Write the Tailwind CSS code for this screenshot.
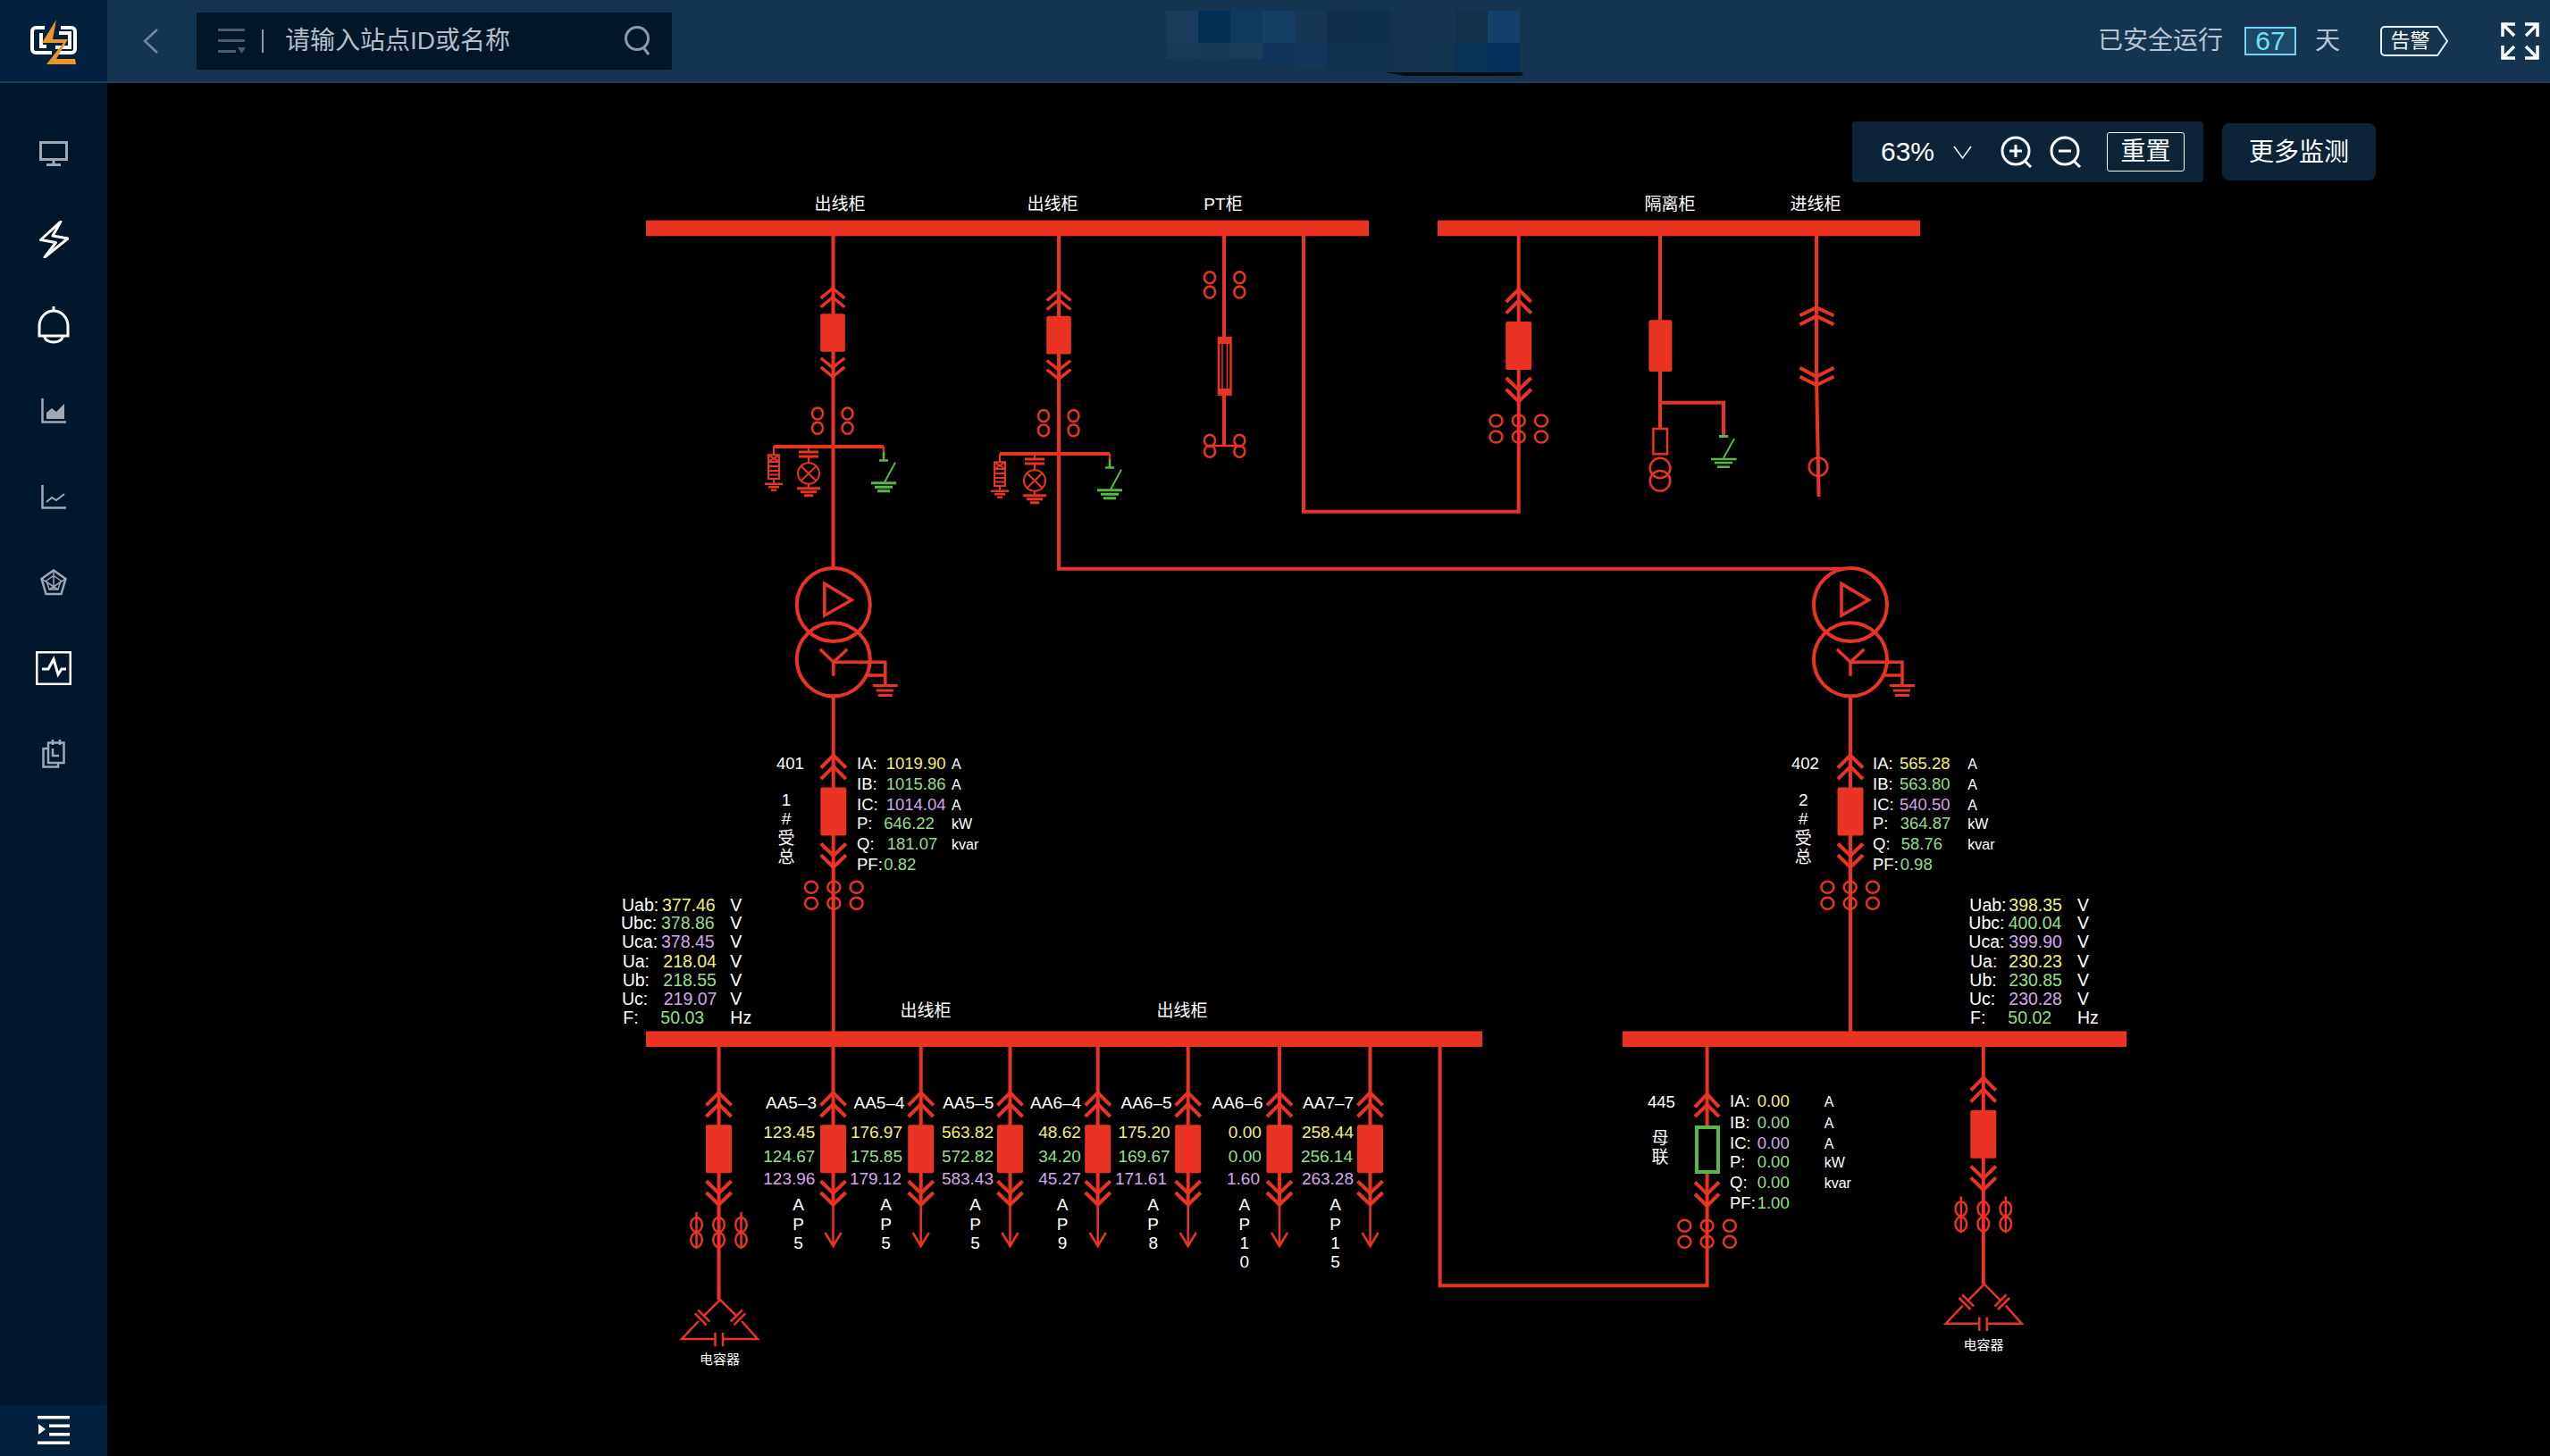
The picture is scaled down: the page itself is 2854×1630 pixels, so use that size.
<!DOCTYPE html>
<html lang="zh-CN">
<head>
    <meta charset="UTF-8">
    <meta name="viewport" content="width=device-width, initial-scale=1.0">
    <title>一次系统图</title>
    <script src="https://cdn.jsdelivr.net/npm/@tailwindcss/browser@4"></script>
</head>
<body class="bg-black text-white font-['Liberation_Sans','Noto_Sans_CJK_SC',sans-serif]">
<div class="w-[2854px] h-[1630px] flex flex-col overflow-hidden">

    <!-- header -->
    <header class="relative h-[93px] flex items-center bg-[#15344f] border-b-2 border-[#1c3f5e]">
        <div class="w-[120px] h-full flex items-center justify-center bg-[#04203f]">
            <svg width="80" height="70" viewBox="20 8 80 70">
                <path d="M50 28H40a4 4 0 0 0-4 4v20a4 4 0 0 0 4 4h18M68 28h12a4 4 0 0 1 4 4v20a4 4 0 0 1-4 4H64M46 34v15h6M66 34h12v16H62" fill="none" stroke="#fff" stroke-width="4"/>
                <polygon points="63,19 47,45 57,45 71,45 52,69 85,69 84,63 63,63 76,41 59,41" fill="#e9962f"/>
            </svg>
        </div>
        <svg class="ml-[40px]" width="18" height="28" viewBox="0 0 18 28"><path d="M16 1 2 14l14 13" fill="none" stroke="#6e8aa6" stroke-width="2.500"/></svg>
        <div class="ml-[42px] w-[532px] h-[64px] flex items-center bg-[#031729]">
            <svg class="ml-[24px]" width="31" height="28" viewBox="0 0 31 28" fill="#4c5b69">
                <rect y="0" width="30" height="3"/><rect y="12" width="30" height="3"/><rect y="24" width="20" height="3"/><polygon points="22,21 31,21 26.500,28"/>
            </svg>
            <div class="ml-[18px] w-[2px] h-[26px] bg-[#8d99a5]"></div>
            <span class="ml-[24px] text-[28px] text-[#b5bec8] leading-none">请输入站点ID或名称</span>
            <svg class="ml-auto mr-[23px]" width="30" height="33" viewBox="0 0 30 33" fill="none" stroke="#8b9aa8" stroke-width="3"><ellipse cx="14" cy="14" rx="12.500" ry="12.500"/><path d="m21 24 6 8"/></svg>
        </div>

        <!-- mosaic that hides the site name -->
        <svg class="absolute left-[1305px] top-[12px]" width="400" height="75" viewBox="0 0 400 75">
            <g>
                <rect x="0" width="36" height="36" fill="#1a3b5c"/><rect x="36" width="36" height="36" fill="#042f55"/><rect x="72" width="36" height="36" fill="#0f3a5e"/><rect x="108" width="36" height="36" fill="#153f63"/><rect x="144" width="36" height="36" fill="#163653"/><rect x="180" width="36" height="36" fill="#122e48"/><rect x="216" width="36" height="36" fill="#10304a"/><rect x="252" width="36" height="36" fill="#15334f"/><rect x="288" width="36" height="36" fill="#16344f"/><rect x="324" width="36" height="36" fill="#143049"/><rect x="360" width="36" height="36" fill="#12406a"/>
                <rect x="0" y="36" width="36" height="18" fill="#18395a"/><rect x="36" y="36" width="36" height="18" fill="#18385a"/><rect x="72" y="36" width="36" height="18" fill="#1b3d5a"/><rect x="108" y="36" width="36" height="22" fill="#0f355c"/><rect x="144" y="36" width="36" height="28" fill="#15355a"/><rect x="180" y="36" width="36" height="32" fill="#12304f"/><rect x="216" y="36" width="36" height="32" fill="#12304f"/><rect x="252" y="36" width="36" height="32" fill="#14324e"/><rect x="288" y="36" width="36" height="32" fill="#14334d"/><rect x="324" y="36" width="36" height="33" fill="#0a3257"/><rect x="360" y="36" width="36" height="33" fill="#05305c"/>
            </g>
            <path d="M245 69h155l-2 4h-130z" fill="#020a12"/>
        </svg>

        <div class="ml-auto flex items-center text-[28px] leading-none text-[#b9c4d0]">
            <span>已安全运行</span>
            <span class="ml-[24px] w-[58px] h-[32px] flex items-center justify-center border-2 border-[#6fd6ee] bg-[#1c4a66] text-[#6fe0f5] text-[30px]">67</span>
            <span class="ml-[21px]">天</span>
            <div class="relative ml-[45px] w-[76px] h-[34px] flex items-center justify-center">
                <svg class="absolute inset-0" width="76" height="34" viewBox="0 0 76 34"><path d="M5 1h59l11 16-11 16H5a4 4 0 0 1-4-4V5a4 4 0 0 1 4-4z" fill="none" stroke="#e6f0f8" stroke-width="2"/></svg>
                <span class="relative pr-[9px] text-[22px] text-white">告警</span>
            </div>
            <svg class="ml-[59px] mr-[12px]" width="43" height="42" viewBox="0 0 43 42" fill="none" stroke="#fff" stroke-width="3.500">
                <path d="M2 16V2h14M2 2l13 13M27 2h14v14M41 2 28 15M2 26v14h14M2 40l13-13M41 26v14H27M41 40 28 27"/>
            </svg>
        </div>
    </header>

    <div class="flex flex-1">
        <!-- sidebar -->
        <aside class="w-[120px] flex flex-col items-center bg-[#00172c] pt-[31px]">
            <div class="h-[96px] flex items-center justify-center">
                <svg width="32" height="28" viewBox="0 0 32 28" fill="none" stroke="#a0a8b2" stroke-width="3"><rect x="1.500" y="1.500" width="29" height="19"/><path d="M16 21v5M8 26.500h16"/></svg>
            </div>
            <div class="h-[96px] flex items-center justify-center">
                <svg width="33" height="42" viewBox="0 0 33 42" fill="none" stroke="#fff" stroke-width="3"><path d="M24 1 1.500 21.500l17 3L6 41l26-21-17-3z" stroke-linejoin="round"/></svg>
            </div>
            <div class="h-[96px] flex items-center justify-center">
                <svg width="36" height="42" viewBox="0 0 36 42" fill="none" stroke="#fff" stroke-width="3"><path d="M18 0v4M2 33V22a16 17 0 0 1 32 0v11zM8 34a10 6 0 0 0 20 0"/></svg>
            </div>
            <div class="h-[96px] flex items-center justify-center">
                <svg width="28" height="28" viewBox="0 0 28 28"><path d="M1.500 0v26.500H28" fill="none" stroke="#a0a8b2" stroke-width="2.500"/><path d="M6 23v-7l6-5 5 4 9-9v17z" fill="#a0a8b2"/></svg>
            </div>
            <div class="h-[96px] flex items-center justify-center">
                <svg width="28" height="27" viewBox="0 0 28 27" fill="none" stroke="#a0a8b2" stroke-width="2"><path d="M1.500 0v25.500H28" stroke-width="2.500"/><path d="m6 19 6-5 5 3 9-7"/></svg>
            </div>
            <div class="h-[96px] flex items-center justify-center">
                <svg width="30" height="30" viewBox="0 0 30 30" fill="none" stroke="#a0a8b2" stroke-width="2.500"><path d="M15 1.500 28.500 11 23.500 28H6.500L1.500 11z"/><path d="M15 7.500 23 13 20 23H10L7 13zM15 1.500V23M1.500 11 20 23M28.500 11 10 23" stroke-width="1.500"/></svg>
            </div>
            <div class="h-[96px] flex items-center justify-center">
                <svg width="40" height="38" viewBox="0 0 40 38" fill="none" stroke="#fff" stroke-width="2.500"><rect x="1.250" y="1.250" width="37.500" height="35.500"/><path d="M7 20h7l6-11 5 17 4-6h5" stroke-width="3"/></svg>
            </div>
            <div class="h-[96px] flex items-center justify-center">
                <svg width="26" height="32" viewBox="0 0 26 32" fill="none" stroke="#a0a8b2" stroke-width="2.500"><path d="M7 10H1.500v20.500H18V26M7 10V3.500h17.500V26H7zM12 0v6M20 0v6"/><path d="M12 10v8h7"/></svg>
            </div>
            <div class="mt-auto w-full h-[57px] flex items-center justify-center bg-[#03213f]">
                <svg width="36" height="33" viewBox="0 0 36 33" fill="#fff"><rect y="0" width="36" height="3.500"/><rect x="13" y="9.500" width="23" height="3.500"/><rect x="13" y="19" width="23" height="3.500"/><rect y="28.500" width="36" height="3.500"/><polygon points="1,9 9,15 1,21"/></svg>
            </div>
        </aside>

        <!-- diagram area -->
        <main class="relative flex-1 bg-black">
            <div class="relative z-10 flex justify-end items-center gap-[21px] pt-[43px] pr-[195px] text-white">
                <div class="w-[393px] h-[68px] flex items-center rounded-[4px] bg-[#0d2337]">
                    <span class="ml-[32px] text-[30px] leading-none">63%</span>
                    <svg class="ml-[21px]" width="21" height="17" viewBox="0 0 21 17"><path d="m1 2 9.500 13L20 2" fill="none" stroke="#fff" stroke-width="1.500"/></svg>
                    <svg class="ml-[32px]" width="37" height="36" viewBox="0 0 37 36" fill="none" stroke="#fff" stroke-width="3"><circle cx="17" cy="17" r="15"/><path d="M17 10v14M10 17h14M27 28l7 7"/></svg>
                    <svg class="ml-[18px]" width="37" height="36" viewBox="0 0 37 36" fill="none" stroke="#fff" stroke-width="3"><circle cx="17" cy="17" r="15"/><path d="M10 17h14M27 28l7 7"/></svg>
                    <span class="ml-[27px] w-[87px] h-[44px] flex items-center justify-center rounded-[3px] border border-white text-[28px] leading-none">重置</span>
                </div>
                <div class="w-[172px] h-[64px] pt-[2px] flex items-center justify-center rounded-[8px] bg-[#0d2337] text-[28px] leading-none">更多监测</div>
            </div>

            <svg class="absolute inset-0" width="2734" height="1537" viewBox="120 93 2734 1537" fill="none">
                <defs>
                    <g id="cart">
                        <path d="M-14 14 0 0 14 14M-14 26.700 0 12.700 14 26.700M-14 99 0 112.400 14 99M-14 111.700 0 125.400 14 111.700" stroke="#ea3323" stroke-width="4"/>
                        <rect x="-14.500" y="36" width="29" height="54" rx="2" fill="#ea3323"/>
                    </g>
                    <g id="ct2" stroke="#ea3323" stroke-width="2.500">
                        <ellipse cx="-17" cy="0" rx="6" ry="6.500"/><ellipse cx="-17" cy="16.300" rx="6" ry="6.500"/>
                        <ellipse cx="16.500" cy="0" rx="6" ry="6.500"/><ellipse cx="16.500" cy="16.300" rx="6" ry="6.500"/>
                    </g>
                    <g id="ct3" stroke="#ea3323" stroke-width="2.500">
                        <ellipse cx="-25.300" cy="0" rx="7" ry="6.500"/><ellipse cx="-25.300" cy="18" rx="7" ry="6.500"/>
                        <ellipse cx="0" cy="0" rx="7" ry="6.500"/><ellipse cx="0" cy="18" rx="7" ry="6.500"/>
                        <ellipse cx="25.300" cy="0" rx="7" ry="6.500"/><ellipse cx="25.300" cy="18" rx="7" ry="6.500"/>
                    </g>
                    <g id="fuse3" stroke="#ea3323" stroke-width="2.500">
                        <ellipse cx="-25" cy="0" rx="6.300" ry="8"/><ellipse cx="-25" cy="17" rx="6.300" ry="8"/><path d="M-25-14V27"/>
                        <ellipse cx="0" cy="0" rx="6.300" ry="8"/><ellipse cx="0" cy="17" rx="6.300" ry="8"/>
                        <ellipse cx="25" cy="0" rx="6.300" ry="8"/><ellipse cx="25" cy="17" rx="6.300" ry="8"/><path d="M25-14V27"/>
                    </g>
                    <g id="earth" stroke="#ea3323">
                        <path d="M-66 0H57" stroke-width="4"/>
                        <g stroke-width="2">
                            <path d="M-66 0V9M-66 36V42"/>
                            <rect x="-72" y="9.300" width="12" height="26.700"/>
                            <path d="M-72 9.300-60 17M-60 9.300-72 17M-72 17H-60M-72 22H-60M-72 27H-60M-72 31.500H-60"/>
                            <path d="M-76 41.700H-56M-72 45.300H-60" stroke-width="2.500"/>
                            <path d="M-69 48.700H-63" stroke-width="2.500"/>
                            <path d="M-27 0V6M-27 11V18M-27 41.700V47"/>
                            <path d="M-38 6H-16M-38 11H-16" stroke-width="3"/>
                            <ellipse cx="-27" cy="30" rx="12" ry="11.700"/>
                            <path d="M-35.500 21.700-18.500 38.300M-18.500 21.700-35.500 38.300"/>
                            <path d="M-40 46.700H-14M-36 50.700H-18M-32 54.700H-22" stroke-width="3"/>
                            <path d="M57 0V6" stroke-width="2.500"/>
                        </g>
                        <g stroke="#57b846" stroke-width="3">
                            <path d="M57 6V15M52 15.500H62" stroke-width="2.500"/>
                            <path d="M70 17.700 58 40" stroke-width="2"/>
                            <path d="M43 40.700H71M47 45.300H67M50 49.700H64"/>
                        </g>
                    </g>
                    <g id="xfmr" stroke="#ea3323" stroke-width="4">
                        <circle cx="0" cy="0" r="41"/><circle cx="0" cy="61.300" r="41"/>
                        <path d="M-10-23.600V11.900L20.500-5.300z" stroke-width="3.500"/>
                        <path d="M-15 49.700 0 64.200 15.500 49.700M0 64.200V79.700M0 64.200H58V89.300M37.300 79H58" stroke-width="3.500"/>
                        <path d="M44 90.400H72M48 95.900H67M50 101.400H66" stroke-width="3"/>
                    </g>
                    <g id="feeder">
                        <path d="M0 0V176" stroke="#ea3323" stroke-width="4"/>
                        <path d="M0 176V223M-9 208 0 223 9 208" stroke="#ea3323" stroke-width="2.500"/>
                        <circle cx="0" cy="176" r="2" fill="#f3d55a"/>
                    </g>
                    <g id="capbank" stroke="#ea3323" stroke-width="2.500">
                        <path d="M0 0-18.200 18.200M-24 24-43 44H-5.500M3 44H42L24 24M18.200 18.200 0 0"/>
                        <path d="M-11.700 24.700-24.700 11.700M-15.300 28.300-28.300 15.300M11.700 24.700 24.700 11.700M15.300 28.300 28.300 15.300M-5.500 36.700V52.300M3 36.700V52.300"/>
                    </g>
                </defs>

                <!-- top bus -->
                <rect x="723" y="246.700" width="809" height="17.600" fill="#ea3323"/>
                <rect x="1609" y="246.700" width="540" height="17.600" fill="#ea3323"/>
                <!-- bottom bus -->
                <rect x="723" y="1154.400" width="936" height="17.600" fill="#ea3323"/>
                <rect x="1816" y="1154.400" width="564" height="17.600" fill="#ea3323"/>

                <g stroke="#ea3323" stroke-width="4">
                    <path d="M932.500 264V636M932.700 779V1155M1185 264V636.700H2062M1370 264V378M1370 442V500M1459 264V572.700H1699.700V264M1699.700 412V471M1858 264V480M1858 450.700H1929V487M2033 264V421.700L2035.600 556M2071 779V1155M804.500 1172V1455M2219.800 1172V1437.700M1611.600 1172V1439.300H1910.600V1172"/>
                </g>

                <!-- top feeders -->
                <use href="#cart" transform="translate(932,322.700) scale(.95,.79)"/>
                <use href="#ct2" transform="translate(932,463)"/>
                <use href="#earth" transform="translate(932,500)"/>
                <use href="#cart" transform="translate(1185,325.400) scale(.95,.79)"/>
                <use href="#ct2" transform="translate(1185,465.500)"/>
                <use href="#earth" transform="translate(1185,508)"/>

                <!-- PT -->
                <g stroke="#ea3323" stroke-width="2.500">
                    <ellipse cx="1354" cy="310.700" rx="6" ry="6.500"/><ellipse cx="1354" cy="327" rx="6" ry="6.500"/><ellipse cx="1387.300" cy="310.700" rx="6" ry="6.500"/><ellipse cx="1387.300" cy="327" rx="6" ry="6.500"/>
                    <ellipse cx="1354" cy="493.300" rx="6" ry="6.500"/><ellipse cx="1354" cy="505.300" rx="6" ry="6.500"/><ellipse cx="1387.300" cy="493.300" rx="6" ry="6.500"/><ellipse cx="1387.300" cy="505.300" rx="6" ry="6.500"/>
                    <path d="M1354 499H1387"/>
                    <rect x="1364" y="378.300" width="13.500" height="63.400"/>
                    <path d="M1368 385V436M1373.500 385V436" stroke-width="1.500"/>
                </g>
                <rect x="1363" y="378" width="15" height="7" fill="#ea3323"/>
                <rect x="1363" y="435" width="15" height="7" fill="#ea3323"/>

                <!-- right section top -->
                <use href="#cart" transform="translate(1699.700,324)"/>
                <use href="#ct3" transform="translate(1699.700,471)"/>
                <rect x="1845.400" y="358.300" width="26" height="57.700" rx="2" fill="#ea3323"/>
                <g stroke="#ea3323" stroke-width="2.500">
                    <rect x="1850.400" y="480" width="15.600" height="28.300"/>
                    <circle cx="1858" cy="524" r="11.300"/><circle cx="1858" cy="538.300" r="11.300"/>
                    <path d="M2014.500 353.300 2033 344.300 2052.400 353.300M2014.500 363.300 2033 354 2052.400 363.300M2014.500 411.700 2033 421.700 2052.400 411.700M2014.500 421.700 2033 431 2052.400 421.700" stroke-width="4"/>
                    <circle cx="2035" cy="522.700" r="10.300"/>
                </g>
                <g stroke="#57b846">
                    <path d="M1929 487V488.500M1924 488.500H1934" stroke-width="3"/>
                    <path d="M1941 491 1929 512.700" stroke-width="2"/>
                    <path d="M1915 514H1943.600M1919 518H1939M1922 522.700H1936" stroke-width="2.500"/>
                </g>

                <!-- transformers -->
                <use href="#xfmr" transform="translate(932.800,677)"/>
                <use href="#xfmr" transform="translate(2071,677)"/>
                <use href="#cart" transform="translate(932.800,845.500)"/>
                <use href="#ct3" transform="translate(933.300,993.300)"/>
                <use href="#cart" transform="translate(2071,845.500)"/>
                <use href="#ct3" transform="translate(2070.700,993.300)"/>

                <!-- bottom bus outgoing -->
                <use href="#feeder" transform="translate(932.500,1172)"/>
                <use href="#feeder" transform="translate(1030.700,1172)"/>
                <use href="#feeder" transform="translate(1130.500,1172)"/>
                <use href="#feeder" transform="translate(1228.700,1172)"/>
                <use href="#feeder" transform="translate(1329.700,1172)"/>
                <use href="#feeder" transform="translate(1432,1172)"/>
                <use href="#feeder" transform="translate(1533.500,1172)"/>
                <use href="#cart" transform="translate(932.500,1223.300)"/>
                <use href="#cart" transform="translate(1030.700,1223.300)"/>
                <use href="#cart" transform="translate(1130.500,1223.300)"/>
                <use href="#cart" transform="translate(1228.700,1223.300)"/>
                <use href="#cart" transform="translate(1329.700,1223.300)"/>
                <use href="#cart" transform="translate(1432,1223.300)"/>
                <use href="#cart" transform="translate(1533.500,1223.300)"/>

                <!-- capacitor banks -->
                <use href="#cart" transform="translate(804.500,1223.300)"/>
                <use href="#fuse3" transform="translate(804.500,1371)"/>
                <use href="#capbank" transform="translate(806,1455)"/>
                <use href="#cart" transform="translate(2219.800,1206.700)"/>
                <use href="#fuse3" transform="translate(2219.800,1353.300)"/>
                <use href="#capbank" transform="translate(2220.800,1437.700)"/>

                <!-- bus tie -->
                <path d="M1897 1239.300 1910.600 1225 1924 1239.300M1897 1250 1910.600 1236.700 1924 1250M1897 1323.300 1910.600 1336.700 1924 1323.300M1897 1336.700 1910.600 1350 1924 1336.700" stroke="#ea3323" stroke-width="4"/>
                <rect x="1899" y="1262" width="24" height="50" fill="#000" stroke="#57b846" stroke-width="4"/>
                <use href="#ct3" transform="translate(1910.600,1372.300)"/>

                <!-- labels -->
                <g class="fill-white stroke-none text-[19px]" text-anchor="middle">
                    <text x="940" y="235">出线柜</text>
                    <text x="1178" y="235">出线柜</text>
                    <text x="1369" y="235">PT柜</text>
                    <text x="1869" y="235">隔离柜</text>
                    <text x="2032" y="235">进线柜</text>
                    <text x="1036" y="1138">出线柜</text>
                    <text x="1323" y="1138">出线柜</text>
                </g>
                <g class="fill-white text-[15px]" text-anchor="middle">
                    <text x="805.600" y="1527">电容器</text>
                    <text x="2220" y="1511">电容器</text>
                </g>

                <!-- 401 -->
                <g class="fill-white text-[18.500px]">
                    <text x="869" y="861">401</text>
                    <text x="959" y="861">IA:</text><text x="959" y="884">IB:</text><text x="959" y="906.800">IC:</text><text x="959" y="927.500">P:</text><text x="959" y="950.600">Q:</text><text x="959" y="973.600">PF:</text>
                    <text x="2005" y="861">402</text>
                    <text x="2096" y="861">IA:</text><text x="2096" y="884">IB:</text><text x="2096" y="906.800">IC:</text><text x="2096" y="927.500">P:</text><text x="2096" y="950.600">Q:</text><text x="2096" y="973.600">PF:</text>
                    <text x="1844" y="1239.500">445</text>
                    <text x="1936" y="1239.300">IA:</text><text x="1936" y="1262.700">IB:</text><text x="1936" y="1285.700">IC:</text><text x="1936" y="1306.700">P:</text><text x="1936" y="1330">Q:</text><text x="1936" y="1352.700">PF:</text>
                </g>
                <g class="fill-white text-[16px]">
                    <text x="1065" y="861">A</text><text x="1065" y="884">A</text><text x="1065" y="906.800">A</text><text x="1065" y="927.500">kW</text><text x="1065" y="950.600">kvar</text>
                    <text x="2202.300" y="861">A</text><text x="2202.300" y="884">A</text><text x="2202.300" y="906.800">A</text><text x="2202.300" y="927.500">kW</text><text x="2202.300" y="950.600">kvar</text>
                    <text x="2041.700" y="1239.300">A</text><text x="2041.700" y="1262.700">A</text><text x="2041.700" y="1285.700">A</text><text x="2041.700" y="1306.700">kW</text><text x="2041.700" y="1330">kvar</text>
                </g>
                <g class="fill-[#f3ef79] text-[18.500px]">
                    <text x="991.700" y="861">1019.90</text>
                    <text x="2126" y="861">565.28</text>
                    <text x="1966.700" y="1239.300">0.00</text>
                </g>
                <g class="fill-[#93df8a] text-[18.500px]">
                    <text x="991.700" y="884">1015.86</text><text x="989.300" y="927.500">646.22</text><text x="992.700" y="950.600">181.07</text><text x="989.300" y="973.600">0.82</text>
                    <text x="2126" y="884">563.80</text><text x="2126.700" y="927.500">364.87</text><text x="2127.700" y="950.600">58.76</text><text x="2126.700" y="973.600">0.98</text>
                    <text x="1966.700" y="1262.700">0.00</text><text x="1966.700" y="1306.700">0.00</text><text x="1966.700" y="1330">0.00</text><text x="1966.700" y="1352.700">1.00</text>
                </g>
                <g class="fill-[#d3a8ea] text-[18.500px]">
                    <text x="991.700" y="906.800">1014.04</text>
                    <text x="2126" y="906.800">540.50</text>
                    <text x="1966.700" y="1285.700">0.00</text>
                </g>

                <!-- vertical names -->
                <g class="fill-white text-[19px]" text-anchor="middle">
                    <text x="880" y="902">1</text><text x="880" y="922.500">#</text><text x="880" y="945">受</text><text x="880" y="966">总</text>
                    <text x="2018.300" y="902">2</text><text x="2018.300" y="922.500">#</text><text x="2018.300" y="945">受</text><text x="2018.300" y="966">总</text>
                    <text x="1858" y="1281">母</text><text x="1858" y="1302">联</text>
                    <text x="893.500" y="1355">A</text><text x="893.500" y="1376.700">P</text><text x="893.500" y="1398.300">5</text>
                    <text x="991.600" y="1355">A</text><text x="991.600" y="1376.700">P</text><text x="991.600" y="1398.300">5</text>
                    <text x="1091.500" y="1355">A</text><text x="1091.500" y="1376.700">P</text><text x="1091.500" y="1398.300">5</text>
                    <text x="1189" y="1355">A</text><text x="1189" y="1376.700">P</text><text x="1189" y="1398.300">9</text>
                    <text x="1290.700" y="1355">A</text><text x="1290.700" y="1376.700">P</text><text x="1290.700" y="1398.300">8</text>
                    <text x="1392.900" y="1355">A</text><text x="1392.900" y="1376.700">P</text><text x="1392.900" y="1398.300">1</text><text x="1392.900" y="1419.300">0</text>
                    <text x="1494.500" y="1355">A</text><text x="1494.500" y="1376.700">P</text><text x="1494.500" y="1398.300">1</text><text x="1494.500" y="1419.300">5</text>
                    <text x="885.500" y="1240.700">AA5–3</text><text x="984" y="1240.700">AA5–4</text><text x="1083.700" y="1240.700">AA5–5</text><text x="1181.600" y="1240.700">AA6–4</text><text x="1283" y="1240.700">AA6–5</text><text x="1385" y="1240.700">AA6–6</text><text x="1486.600" y="1240.700">AA7–7</text>
                </g>

                <!-- feeder currents -->
                <g class="text-[19px]" text-anchor="end">
                    <g class="fill-[#f3ef79]">
                        <text x="912.400" y="1274.300">123.45</text><text x="1010" y="1274.300">176.97</text><text x="1112" y="1274.300">563.82</text><text x="1209.800" y="1274.300">48.62</text><text x="1309.600" y="1274.300">175.20</text><text x="1411.800" y="1274.300">0.00</text><text x="1515" y="1274.300">258.44</text>
                    </g>
                    <g class="fill-[#93df8a]">
                        <text x="912.400" y="1300.700">124.67</text><text x="1010" y="1300.700">175.85</text><text x="1112" y="1300.700">572.82</text><text x="1209.800" y="1300.700">34.20</text><text x="1309.600" y="1300.700">169.67</text><text x="1411.800" y="1300.700">0.00</text><text x="1514" y="1300.700">256.14</text>
                    </g>
                    <g class="fill-[#d3a8ea]">
                        <text x="912.400" y="1325.700">123.96</text><text x="1009" y="1325.700">179.12</text><text x="1112" y="1325.700">583.43</text><text x="1209.800" y="1325.700">45.27</text><text x="1306" y="1325.700">171.61</text><text x="1410" y="1325.700">1.60</text><text x="1515" y="1325.700">263.28</text>
                    </g>
                </g>

                <!-- bus voltages left -->
                <g class="fill-white text-[19.500px]">
                    <text x="696" y="1019.500">Uab:</text><text x="695" y="1040">Ubc:</text><text x="696" y="1060.800">Uca:</text><text x="696.700" y="1082.500">Ua:</text><text x="696.700" y="1103.800">Ub:</text><text x="696" y="1124.500">Uc:</text><text x="697.300" y="1145.800">F:</text>
                    <text x="817.300" y="1019.500">V</text><text x="817.300" y="1040">V</text><text x="817.300" y="1060.800">V</text><text x="817.300" y="1082.500">V</text><text x="817.300" y="1103.800">V</text><text x="817.300" y="1124.500">V</text><text x="817.300" y="1145.800">Hz</text>
                    <text x="2204.300" y="1019.500">Uab:</text><text x="2203.300" y="1040">Ubc:</text><text x="2203.300" y="1060.800">Uca:</text><text x="2205" y="1082.500">Ua:</text><text x="2204.300" y="1103.800">Ub:</text><text x="2204" y="1124.500">Uc:</text><text x="2205" y="1145.800">F:</text>
                    <text x="2325" y="1019.500">V</text><text x="2325" y="1040">V</text><text x="2325" y="1060.800">V</text><text x="2325" y="1082.500">V</text><text x="2325" y="1103.800">V</text><text x="2325" y="1124.500">V</text><text x="2325" y="1145.800">Hz</text>
                </g>
                <g class="fill-[#f3ef79] text-[19.500px]">
                    <text x="741" y="1019.500">377.46</text><text x="742.300" y="1082.500">218.04</text>
                    <text x="2248.300" y="1019.500">398.35</text><text x="2248.300" y="1082.500">230.23</text>
                </g>
                <g class="fill-[#93df8a] text-[19.500px]">
                    <text x="740" y="1040">378.86</text><text x="742.300" y="1103.800">218.55</text><text x="739.300" y="1145.800">50.03</text>
                    <text x="2247.700" y="1040">400.04</text><text x="2248.300" y="1103.800">230.85</text><text x="2247.300" y="1145.800">50.02</text>
                </g>
                <g class="fill-[#d3a8ea] text-[19.500px]">
                    <text x="740" y="1060.800">378.45</text><text x="742.700" y="1124.500">219.07</text>
                    <text x="2248.300" y="1060.800">399.90</text><text x="2248.300" y="1124.500">230.28</text>
                </g>
            </svg>
        </main>
    </div>
</div>
</body>
</html>
